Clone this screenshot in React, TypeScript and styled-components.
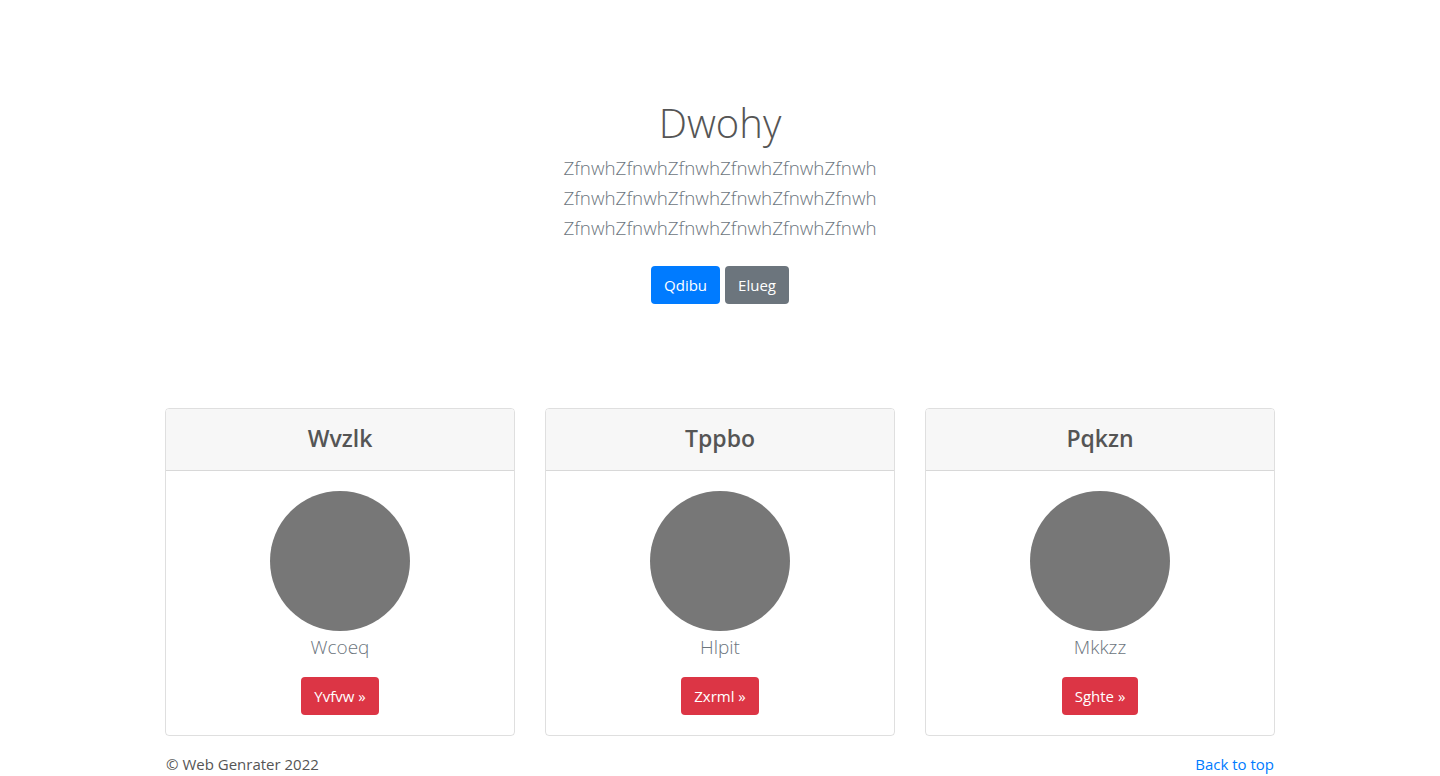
import React from "react";
import styled, { createGlobalStyle } from "styled-components";

const GlobalStyle = createGlobalStyle`
  * {
    box-sizing: border-box;
  }
  body {
    margin: 0;
    background: #fff;
    color: #555;
    font-family: "Open Sans", "Liberation Sans", sans-serif;
    font-size: 16px;
  }
`;

const Hero = styled.section`
  max-width: 700px;
  margin: 0 auto;
  padding: 99px 16px 0;
  text-align: center;
`;

const Title = styled.h1`
  margin: 0 0 6px;
  font-size: 40px;
  font-weight: 300;
  line-height: 48px;
  color: #555;
`;

const Lead = styled.p`
  margin: 0 0 23px;
  font-size: 18.8px;
  font-weight: 300;
  line-height: 30px;
  color: #6c757d;
`;

const ButtonRow = styled.div`
  display: flex;
  justify-content: center;
  gap: 5px;
`;

const Button = styled.a<{ $variant: "primary" | "secondary" | "danger" }>`
  display: inline-block;
  height: 38px;
  padding: 0 13px;
  border-radius: 4px;
  font-size: 15px;
  line-height: 38px;
  color: #fff;
  text-decoration: none;
  background: ${(p) =>
    p.$variant === "primary"
      ? "#007bff"
      : p.$variant === "secondary"
      ? "#6c757d"
      : "#dc3545"};
`;

const Container = styled.main`
  max-width: 1140px;
  margin: 104px auto 0;
  padding: 0 15px;
`;

const CardDeck = styled.div`
  display: grid;
  grid-template-columns: repeat(3, 1fr);
  gap: 30px;
`;

const Card = styled.div`
  border: 1px solid rgba(0, 0, 0, 0.125);
  border-radius: 4px;
  overflow: hidden;
`;

const CardHeader = styled.div`
  height: 62px;
  padding-bottom: 3px;
  display: flex;
  align-items: center;
  justify-content: center;
  background: #f7f7f7;
  border-bottom: 1px solid rgba(0, 0, 0, 0.125);
`;

const CardTitle = styled.h4`
  margin: 0;
  font-size: 23px;
  font-weight: 600;
  color: #555;
`;

const CardBody = styled.div`
  display: flex;
  flex-direction: column;
  align-items: center;
  padding: 20px;
`;

const Avatar = styled.div`
  width: 140px;
  height: 140px;
  border-radius: 50%;
  background: #777;
`;

const Name = styled.div`
  margin: 2px 0 16px;
  font-size: 19px;
  font-weight: 300;
  line-height: 28px;
  color: #6c757d;
`;

const Footer = styled.footer`
  display: flex;
  justify-content: space-between;
  padding: 16px 1px 0;
  font-size: 15px;
  line-height: 24px;
`;

const Copy = styled.span`
  color: #555;
`;

const TopLink = styled.a`
  color: #007bff;
  text-decoration: none;
`;

const plans = [
  { title: "Wvzlk", name: "Wcoeq", action: "Yvfvw" },
  { title: "Tppbo", name: "Hlpit", action: "Zxrml" },
  { title: "Pqkzn", name: "Mkkzz", action: "Sghte" },
];

const line = "Zfnwh".repeat(6);

export default function App() {
  return (
    <>
      <GlobalStyle />
      <Hero>
        <Title>Dwohy</Title>
        <Lead>
          {line}
          <br />
          {line}
          <br />
          {line}
        </Lead>
        <ButtonRow>
          <Button $variant="primary" href="#">
            Qdibu
          </Button>
          <Button $variant="secondary" href="#">
            Elueg
          </Button>
        </ButtonRow>
      </Hero>
      <Container>
        <CardDeck>
          {plans.map((plan) => (
            <Card key={plan.title}>
              <CardHeader>
                <CardTitle>{plan.title}</CardTitle>
              </CardHeader>
              <CardBody>
                <Avatar />
                <Name>{plan.name}</Name>
                <Button $variant="danger" href="#">
                  {plan.action} &raquo;
                </Button>
              </CardBody>
            </Card>
          ))}
        </CardDeck>
        <Footer>
          <Copy>&copy; Web Genrater 2022</Copy>
          <TopLink href="#">Back to top</TopLink>
        </Footer>
      </Container>
    </>
  );
}
